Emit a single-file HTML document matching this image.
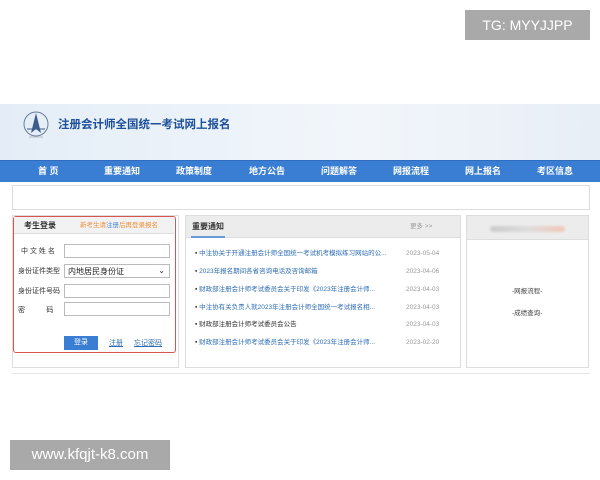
<!DOCTYPE html>
<html><head><meta charset="utf-8"><style>
*{margin:0;padding:0;box-sizing:border-box;line-height:1}
body{width:600px;height:480px;background:#fff;position:relative;overflow:hidden;font-family:"Liberation Sans","Noto Sans CJK SC",sans-serif;}
.a{position:absolute}
.tg{left:465px;top:10px;width:125px;height:30px;background:#a9a9a9;color:#fff;font-size:14px;line-height:30px;text-align:center}
.www{left:10px;top:440px;width:160px;height:30px;background:#a9a9a9;color:#fff;font-size:15px;line-height:30px;text-align:center}
.hdr{left:0;top:104px;width:600px;height:56px;background:linear-gradient(90deg,#e4edf7,#f2f6fb 60%,#e8eef6)}
.nav{left:0;top:160px;width:600px;height:22px;background:#3a7ed3;border-top:1px solid #2f6cc0}
.nav span{position:absolute;top:6px;color:#fff;font-size:9px;font-weight:bold}
.box{border:1px solid #ddd;background:#fff}
.f{font-size:7px;color:#333}
.in{position:absolute;left:64px;width:106px;height:14px;border:1px solid #bbb;background:#fff}
.li{position:absolute;left:195px;font-size:6.5px;color:#2e6db5;white-space:nowrap}
.li::before{content:"▪ ";color:#333}
.dt{position:absolute;left:406px;font-size:6.5px;color:#999}
</style></head><body>
<div class="a tg">TG: MYYJJPP</div>
<div class="a hdr"></div>
<svg class="a" style="left:22px;top:109px" width="28" height="32" viewBox="0 0 28 32"><circle cx="14" cy="15" r="12" fill="none" stroke="#6a7f9c" stroke-width="1"/><path d="M14 4 L9 24 L14 20 L19 24Z" fill="#3d5c8c"/><path d="M5 20 H23" stroke="#3d5c8c"/><path d="M7 28 H21" stroke="#999" stroke-width=".6"/></svg>
<div class="a" style="left:58px;top:120px;font-size:11.5px;font-weight:bold;color:#1d4f9a">注册会计师全国统一考试网上报名</div>
<div class="a nav"><span style="left:38px">首 页</span><span style="left:104px">重要通知</span><span style="left:176px">政策制度</span><span style="left:249px">地方公告</span><span style="left:321px">问题解答</span><span style="left:393px">网报流程</span><span style="left:465px">网上报名</span><span style="left:537px">考区信息</span></div>
<div class="a box" style="left:12px;top:185px;width:578px;height:25px"></div>
<div class="a box" style="left:12px;top:215px;width:167px;height:153px"></div>
<div class="a" style="left:13px;top:216px;width:163px;height:137px;border:1.5px solid #d9534f;border-radius:3px"></div>
<div class="a" style="left:14px;top:217px;width:160px;height:17px;background:#f2f2f2;border-bottom:1px solid #ddd"></div>
<div class="a" style="left:24px;top:222px;font-size:8px;font-weight:bold;color:#333">考生登录</div>
<div class="a" style="left:80px;top:223px;font-size:6.5px;color:#f0903a">新考生请<span style="color:#4a8ad8">注册</span>后再登录报名</div>
<div class="a f" style="left:21px;top:248px">中 文 姓 名</div>
<div class="in" style="top:244px"></div>
<div class="a f" style="left:18px;top:268px">身份证件类型</div>
<div class="in" style="top:264px;font-size:8px;padding:3px 3px;color:#222">内地居民身份证<span style="position:absolute;right:4px;top:2px">⌄</span></div>
<div class="a f" style="left:18px;top:288px">身份证件号码</div>
<div class="in" style="top:284px"></div>
<div class="a f" style="left:18px;top:307px">密&nbsp;&nbsp;&nbsp;&nbsp;&nbsp;&nbsp;&nbsp;&nbsp;&nbsp;&nbsp;&nbsp;码</div>
<div class="in" style="top:302px"></div>
<div class="a" style="left:64px;top:336px;width:34px;height:14px;background:#3a7ed3;color:#fff;font-size:7px;text-align:center;line-height:14px">登录</div>
<div class="a" style="left:109px;top:340px;font-size:7px;color:#2e6db5;text-decoration:underline">注册</div>
<div class="a" style="left:134px;top:340px;font-size:7px;color:#2e6db5;text-decoration:underline">忘记密码</div>
<div class="a box" style="left:185px;top:215px;width:276px;height:153px"></div>
<div class="a" style="left:186px;top:216px;width:274px;height:22px;background:#ececec;border-bottom:1px solid #ddd"></div>
<div class="a" style="left:192px;top:223px;font-size:8px;font-weight:bold;color:#333">重要通知</div>
<div class="a" style="left:191px;top:236px;width:34px;height:2px;background:#6a9bd8"></div>
<div class="a" style="left:410px;top:224px;font-size:6.5px;color:#999">更多 &gt;&gt;</div>
<div class="li" style="top:251px">中注协关于开通注册会计师全国统一考试机考模拟练习网站的公...</div><div class="dt" style="top:251px">2023-05-04</div>
<div class="li" style="top:269px">2023年报名期间各省咨询电话及咨询邮箱</div><div class="dt" style="top:269px">2023-04-06</div>
<div class="li" style="top:287px">财政部注册会计师考试委员会关于印发《2023年注册会计师...</div><div class="dt" style="top:287px">2023-04-03</div>
<div class="li" style="top:305px">中注协有关负责人就2023年注册会计师全国统一考试报名相...</div><div class="dt" style="top:305px">2023-04-03</div>
<div class="li" style="top:322px;color:#333">财政部注册会计师考试委员会公告</div><div class="dt" style="top:322px">2023-04-03</div>
<div class="li" style="top:340px">财政部注册会计师考试委员会关于印发《2023年注册会计师...</div><div class="dt" style="top:340px">2023-02-20</div>
<div class="a box" style="left:466px;top:215px;width:123px;height:153px"></div>
<div class="a" style="left:467px;top:216px;width:121px;height:24px;background:#ececec;border-bottom:1px solid #ddd"></div>
<div class="a" style="left:490px;top:226px;width:75px;height:6px;background:linear-gradient(90deg,#ccc,#ddd,#f2c8b8);border-radius:3px;filter:blur(1px)"></div>
<div class="a" style="left:512px;top:289px;font-size:6.5px;color:#444">-网报流程-</div>
<div class="a" style="left:512px;top:311px;font-size:6.5px;color:#444">-成绩查询-</div>
<div class="a" style="left:12px;top:373px;width:578px;height:1px;background:#e6e6e6"></div>
<div class="a www">www.kfqjt-k8.com</div>
</body></html>
